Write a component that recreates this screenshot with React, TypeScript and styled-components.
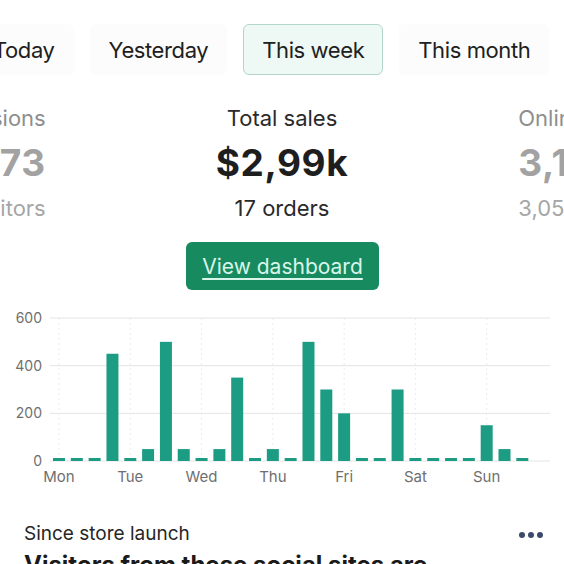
import React from "react";
import styled, { createGlobalStyle } from "styled-components";

const GlobalStyle = createGlobalStyle`
  html, body { margin: 0; padding: 0; background: #ffffff; }
  body { font-family: Inter, "Noto Sans", Arial, sans-serif; color: #1f1f1f; overflow: hidden; }
`;

const Page = styled.div`
  width: 564px;
  height: 564px;
  overflow: hidden;
  display: flex;
  flex-direction: column;
  background: #ffffff;
`;

const Tabs = styled.div`
  display: flex;
  gap: 16px;
  padding-top: 24px;
  margin-left: -26px;
`;

const Tab = styled.div<{ $active?: boolean }>`
  flex-shrink: 0;
  height: 51px;
  box-sizing: border-box;
  padding: 0 18px;
  display: flex;
  align-items: center;
  border-radius: 6px;
  border: 1px solid ${(p) => (p.$active ? "#b4d6ca" : "transparent")};
  background: ${(p) => (p.$active ? "#eef8f4" : "#fcfcfd")};
  font-size: 22px;
  letter-spacing: -0.4px;
  color: #202020;
  white-space: nowrap;
`;

const Stats = styled.div`
  display: flex;
  justify-content: center;
  gap: 170px;
  margin-top: 30px;
`;

const Stat = styled.div<{ $align: "left" | "center" | "right"; $dim?: boolean }>`
  flex-shrink: 0;
  width: ${(p) => (p.$align === "center" ? "auto" : "240px")};
  text-align: ${(p) => p.$align};
  display: flex;
  flex-direction: column;
  color: ${(p) => (p.$dim ? "#9a9a9a" : "#222222")};
  white-space: nowrap;
`;

const StatLabel = styled.div<{ $dim?: boolean }>`
  font-size: 22px;
  line-height: 26px;
  color: ${(p) => (p.$dim ? "#8e8e8e" : "#2a2a2a")};
`;

const StatValue = styled.div<{ $dim?: boolean }>`
  margin-top: 10px;
  font-size: 37px;
  line-height: 44px;
  font-weight: 700;
  letter-spacing: 0.6px;
  color: ${(p) => (p.$dim ? "#a2a2a2" : "#1e1e1e")};
`;

const StatSub = styled.div<{ $dim?: boolean }>`
  margin-top: 10px;
  font-size: 22px;
  line-height: 26px;
  color: ${(p) => (p.$dim ? "#a6a6a6" : "#2a2a2a")};
`;

const ButtonRow = styled.div`
  display: flex;
  justify-content: center;
  margin-top: 21px;
  padding-left: 1px;
`;

const DashButton = styled.div`
  width: 193px;
  height: 48px;
  border-radius: 6px;
  background: #178a5f;
  color: #d8f6e9;
  font-size: 21px;
  text-decoration: underline;
  text-underline-offset: 4px;
  text-decoration-thickness: 1.5px;
  display: flex;
  align-items: center;
  justify-content: center;
`;

const ChartWrap = styled.div`
  margin-top: 10px;
  height: 192px;
`;

const Bottom = styled.div`
  padding: 31px 21px 0 24px;
  display: flex;
  flex-direction: column;
  gap: 5px;
`;

const BottomRow = styled.div`
  display: flex;
  justify-content: space-between;
  align-items: center;
`;

const Since = styled.div`
  font-size: 19px;
  line-height: 22px;
  color: #262626;
`;

const Dots = styled.div`
  display: flex;
  gap: 3px;
  margin-top: 2px;
`;

const Dot = styled.span`
  width: 6px;
  height: 6px;
  border-radius: 50%;
  background: #3b4a6b;
`;

const Heading = styled.div`
  font-size: 24px;
  line-height: 29px;
  font-weight: 700;
  color: #1a1a1a;
  white-space: nowrap;
`;

const values: (number | null)[] = [
  10, 10, 10, 450, 10, 50, 500, 50, 10, 50, 350, 10, 50, 10,
  500, 300, 200, 10, 10, 300, 10, 10, 10, 10, 150, 50, 10, null,
];
const days = ["Mon", "Tue", "Wed", "Thu", "Fri", "Sat", "Sun"];

const Chart: React.FC = () => {
  const top = 300;
  const y0 = 461 - top;
  const scale = 143 / 600;
  const pitch = 17.82;
  const x0 = 53;
  const barW = 12;
  return (
    <svg width="564" height="192" viewBox="0 0 564 192" style={{ display: "block" }}>
      {days.map((d, i) => {
        const cx = x0 + barW / 2 + i * 4 * pitch;
        return (
          <line key={"v" + d} x1={cx} x2={cx} y1={y0 - 143} y2={y0} stroke="#ececec" strokeWidth="1" strokeDasharray="2 3" />
        );
      })}
      {[0, 200, 400, 600].map((v) => {
        const y = y0 - v * scale;
        return (
          <g key={v}>
            <line x1="50" x2="550" y1={y} y2={y} stroke="#e4e4e4" strokeWidth="1" />
            <text x="42" y={y + 5} textAnchor="end" fontSize="14" fill="#6f6f6f" fontFamily="Inter, sans-serif">
              {v}
            </text>
          </g>
        );
      })}
      {values.map((v, i) =>
        v === null ? null : (
          <rect key={i} x={x0 + i * pitch} y={y0 - Math.max(v * scale, 3)} width={barW} height={Math.max(v * scale, 3)} fill="#1d9c84" />
        )
      )}
      {days.map((d, i) => {
        const cx = x0 + barW / 2 + i * 4 * pitch;
        return (
          <text key={d} x={cx} y={y0 + 21} textAnchor="middle" fontSize="15" fill="#6f6f6f" fontFamily="Inter, sans-serif">
            {d}
          </text>
        );
      })}
    </svg>
  );
};

export default function App() {
  return (
    <Page>
      <GlobalStyle />
      <Tabs>
        <Tab>Today</Tab>
        <Tab>Yesterday</Tab>
        <Tab $active>This week</Tab>
        <Tab>This month</Tab>
      </Tabs>
      <Stats>
        <Stat $align="right" $dim>
          <StatLabel $dim>Sessions</StatLabel>
          <StatValue $dim>4,273</StatValue>
          <StatSub $dim>3,411 visitors</StatSub>
        </Stat>
        <Stat $align="center">
          <StatLabel>Total sales</StatLabel>
          <StatValue>$2,99k</StatValue>
          <StatSub>17 orders</StatSub>
        </Stat>
        <Stat $align="left" $dim>
          <StatLabel $dim>Online store sessions</StatLabel>
          <StatValue $dim>3,142</StatValue>
          <StatSub $dim>3,058 visitors</StatSub>
        </Stat>
      </Stats>
      <ButtonRow>
        <DashButton>View dashboard</DashButton>
      </ButtonRow>
      <ChartWrap>
        <Chart />
      </ChartWrap>
      <Bottom>
        <BottomRow>
          <Since>Since store launch</Since>
          <Dots>
            <Dot />
            <Dot />
            <Dot />
          </Dots>
        </BottomRow>
        <Heading>Visitors from these social sites are</Heading>
      </Bottom>
    </Page>
  );
}
